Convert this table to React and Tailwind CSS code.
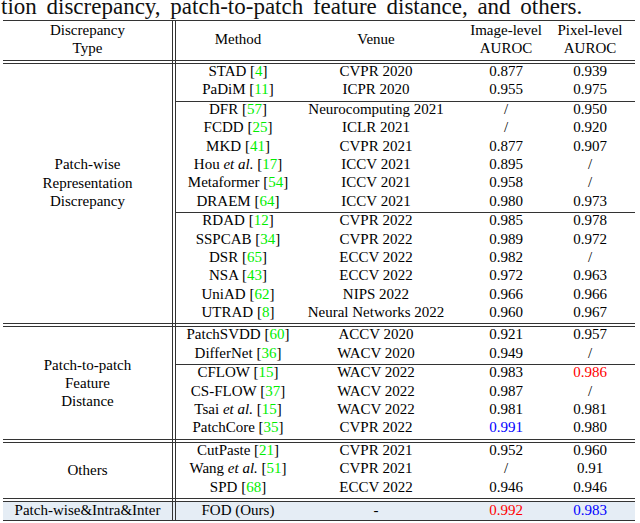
import React from "react";

const S1 = [
  [
    ["STAD", "", "4", "CVPR 2020", "0.877", "0.939"],
    ["PaDiM", "", "11", "ICPR 2020", "0.955", "0.975"],
  ],
  [
    ["DFR", "", "57", "Neurocomputing 2021", "/", "0.950"],
    ["FCDD", "", "25", "ICLR 2021", "/", "0.920"],
    ["MKD", "", "41", "CVPR 2021", "0.877", "0.907"],
    ["Hou", "et al.", "17", "ICCV 2021", "0.895", "/"],
    ["Metaformer", "", "54", "ICCV 2021", "0.958", "/"],
    ["DRAEM", "", "64", "ICCV 2021", "0.980", "0.973"],
  ],
  [
    ["RDAD", "", "12", "CVPR 2022", "0.985", "0.978"],
    ["SSPCAB", "", "34", "CVPR 2022", "0.989", "0.972"],
    ["DSR", "", "65", "ECCV 2022", "0.982", "/"],
    ["NSA", "", "43", "ECCV 2022", "0.972", "0.963"],
    ["UniAD", "", "62", "NIPS 2022", "0.966", "0.966"],
    ["UTRAD", "", "8", "Neural Networks 2022", "0.960", "0.967"],
  ],
];

const S2 = [
  [
    ["PatchSVDD", "", "60", "ACCV 2020", "0.921", "0.957"],
    ["DifferNet", "", "36", "WACV 2020", "0.949", "/"],
  ],
  [
    ["CFLOW", "", "15", "WACV 2022", "0.983", "0.986", "", "red"],
    ["CS-FLOW", "", "37", "WACV 2022", "0.987", "/"],
    ["Tsai", "et al.", "15", "WACV 2022", "0.981", "0.981"],
    ["PatchCore", "", "35", "CVPR 2022", "0.991", "0.980", "blue", ""],
  ],
];

const S3 = [
  [
    ["CutPaste", "", "21", "CVPR 2021", "0.952", "0.960"],
    ["Wang", "et al.", "51", "CVPR 2021", "/", "0.91"],
    ["SPD", "", "68", "ECCV 2022", "0.946", "0.946"],
  ],
];

const colorCls = (c) =>
  c === "red" ? "text-[#ff0000]" : c === "blue" ? "text-[#0000ff]" : "";

function Cols({ children, lead = "leading-[15px]" }) {
  return (
    <div
      className={`grid grid-cols-[124px_152px_108px_60px] pr-[15px] h-[18.4px] ${lead} text-center whitespace-nowrap`}
    >
      {children}
    </div>
  );
}

function Row({ r }) {
  const [name, it, ref, venue, a, b, ca, cb] = r;
  return (
    <Cols>
      <div>
        {name}
        {it ? (
          <>
            {" "}
            <i>{it}</i>
          </>
        ) : null}{" "}
        [<span className="text-[#00ee00]">{ref}</span>]
      </div>
      <div>{venue}</div>
      <div className={colorCls(ca)}>{a}</div>
      <div className={colorCls(cb)}>{b}</div>
    </Cols>
  );
}

function Divider() {
  return <div className="w-[4px] self-stretch border-x border-[#333]" />;
}

function DoubleRule() {
  return (
    <div className="flex h-[4px]">
      <div className="w-[169px] h-[4px] border-y border-[#333]" />
      <div className="w-[4px] h-[4px] border border-[#333]" />
      <div className="flex-1 h-[4px] border-y border-[#333]" />
    </div>
  );
}

function Section({ label, groups, shift }) {
  return (
    <div className="flex">
      <div
        className={`w-[169px] flex flex-col items-center justify-center leading-[18.4px] text-center ${shift}`}
      >
        {label.map((l) => (
          <div key={l}>{l}</div>
        ))}
      </div>
      <Divider />
      <div className="flex-1 flex flex-col">
        {groups.map((g, gi) => (
          <React.Fragment key={gi}>
            {gi > 0 && <div className="h-px bg-[#333]" />}
            {g.map((r, ri) => (
              <Row key={ri} r={r} />
            ))}
          </React.Fragment>
        ))}
      </div>
    </div>
  );
}

export default function App() {
  return (
    <div className="w-[640px] h-[523px] bg-white text-black font-['Liberation_Serif',serif] overflow-hidden">
      <div className="h-[20px] overflow-hidden">
        <div className="text-[23px] leading-[23px] -mt-[5px] ml-[1px] whitespace-nowrap [word-spacing:4px] text-[#111]">
          tion discrepancy, patch-to-patch feature distance, and others.
        </div>
      </div>
      <div className="ml-[3px] w-[632px] text-[15px] font-['Liberation_Serif',serif]">
        <div className="h-px bg-[#333]" />
        <div className="flex h-[39px]">
          <div className="w-[169px] flex flex-col items-center justify-center pb-[3px] leading-[18px]">
            <div>Discrepancy</div>
            <div>Type</div>
          </div>
          <Divider />
          <div className="flex-1 grid grid-cols-[124px_152px_108px_60px] pr-[15px] pb-[3px] leading-[18px] text-center">
            <div className="flex items-center justify-center">Method</div>
            <div className="flex items-center justify-center">Venue</div>
            <div className="flex flex-col items-center justify-center whitespace-nowrap">
              <div>Image-level</div>
              <div>AUROC</div>
            </div>
            <div className="flex flex-col items-center justify-center whitespace-nowrap">
              <div>Pixel-level</div>
              <div>AUROC</div>
            </div>
          </div>
        </div>
        <DoubleRule />
        <Section
          label={["Patch-wise", "Representation", "Discrepancy"]}
          groups={S1}
          shift="pb-[22px]"
        />
        <DoubleRule />
        <Section
          label={["Patch-to-patch", "Feature", "Distance"]}
          groups={S2}
          shift=""
        />
        <DoubleRule />
        <Section label={["Others"]} groups={S3} shift="" />
        <DoubleRule />
        <div className="flex bg-[#e5edf5]">
          <div className="w-[169px] h-[18.4px] leading-[17px] text-center whitespace-nowrap">
            Patch-wise&amp;Intra&amp;Inter
          </div>
          <Divider />
          <div className="flex-1">
            <Cols lead="leading-[17px]">
              <div>FOD (Ours)</div>
              <div>-</div>
              <div className="text-[#ff0000]">0.992</div>
              <div className="text-[#0000ff]">0.983</div>
            </Cols>
          </div>
        </div>
        <div className="h-px bg-[#333]" />
      </div>
    </div>
  );
}
